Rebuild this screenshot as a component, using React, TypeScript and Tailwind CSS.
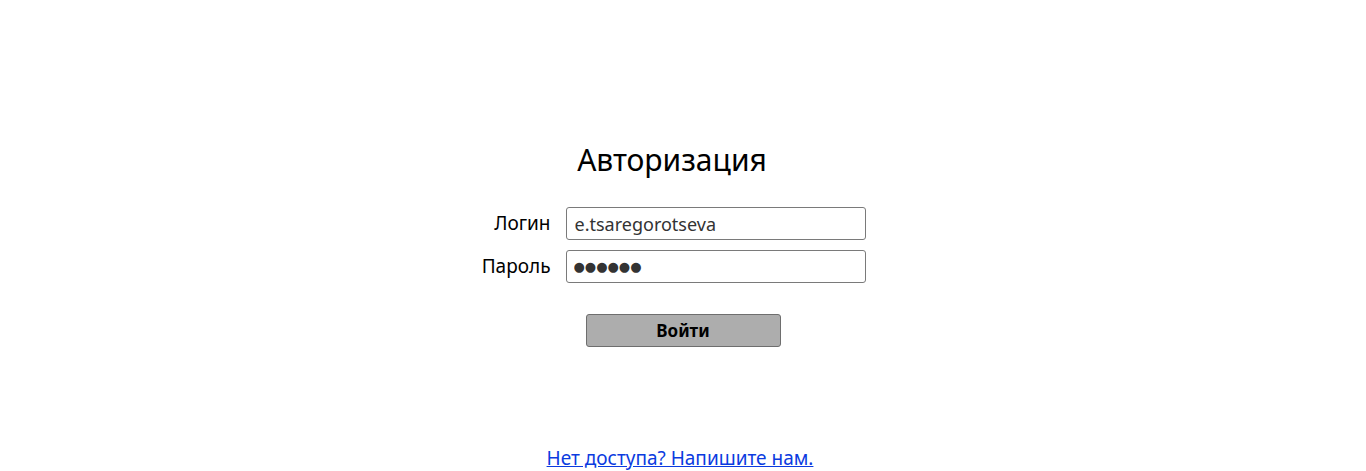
import React from "react";

const App = () => {
  return (
    <div
      className="w-[1366px] h-[471px] bg-white flex flex-col items-center text-black overflow-hidden"
      style={{ fontFamily: '"Noto Sans", "Open Sans", sans-serif' }}
    >
      <h1 className="mt-[138px] mr-[22px] text-[30px] leading-[44px] font-normal">
        Авторизация
      </h1>

      {/* Form */}
      <div className="mt-[25px] mr-[20px] grid grid-cols-[70px_300px] gap-x-[15px] gap-y-[10px] items-center">
        <label className="text-[19px] text-right">Логин</label>
        <input
          className="h-[33px] border border-[#7a7a7a] rounded-[3px] px-2 text-[18px] text-[#333] outline-none"
          defaultValue="e.tsaregorotseva"
        />
        <label className="text-[19px] text-right">Пароль</label>
        <input
          className="h-[33px] border border-[#7a7a7a] rounded-[3px] pl-[7px] pr-2 text-[13px] tracking-[0px] text-[#333] outline-none"
          style={{ fontFamily: '"DejaVu Sans", sans-serif' }}
          defaultValue="●●●●●●"
        />
      </div>

      <button className="mt-[31px] w-[195px] h-[33px] bg-[#adadad] border border-[#6e6e6e] rounded-[3px] text-[17px] font-bold">
        Войти
      </button>

      <a
        href="#"
        className="mt-auto mb-0 mr-[6px] text-[19px] leading-[26px] text-[#0b3be0] underline"
      >
        Нет доступа? Напишите нам.
      </a>
    </div>
  );
};

export default App;
